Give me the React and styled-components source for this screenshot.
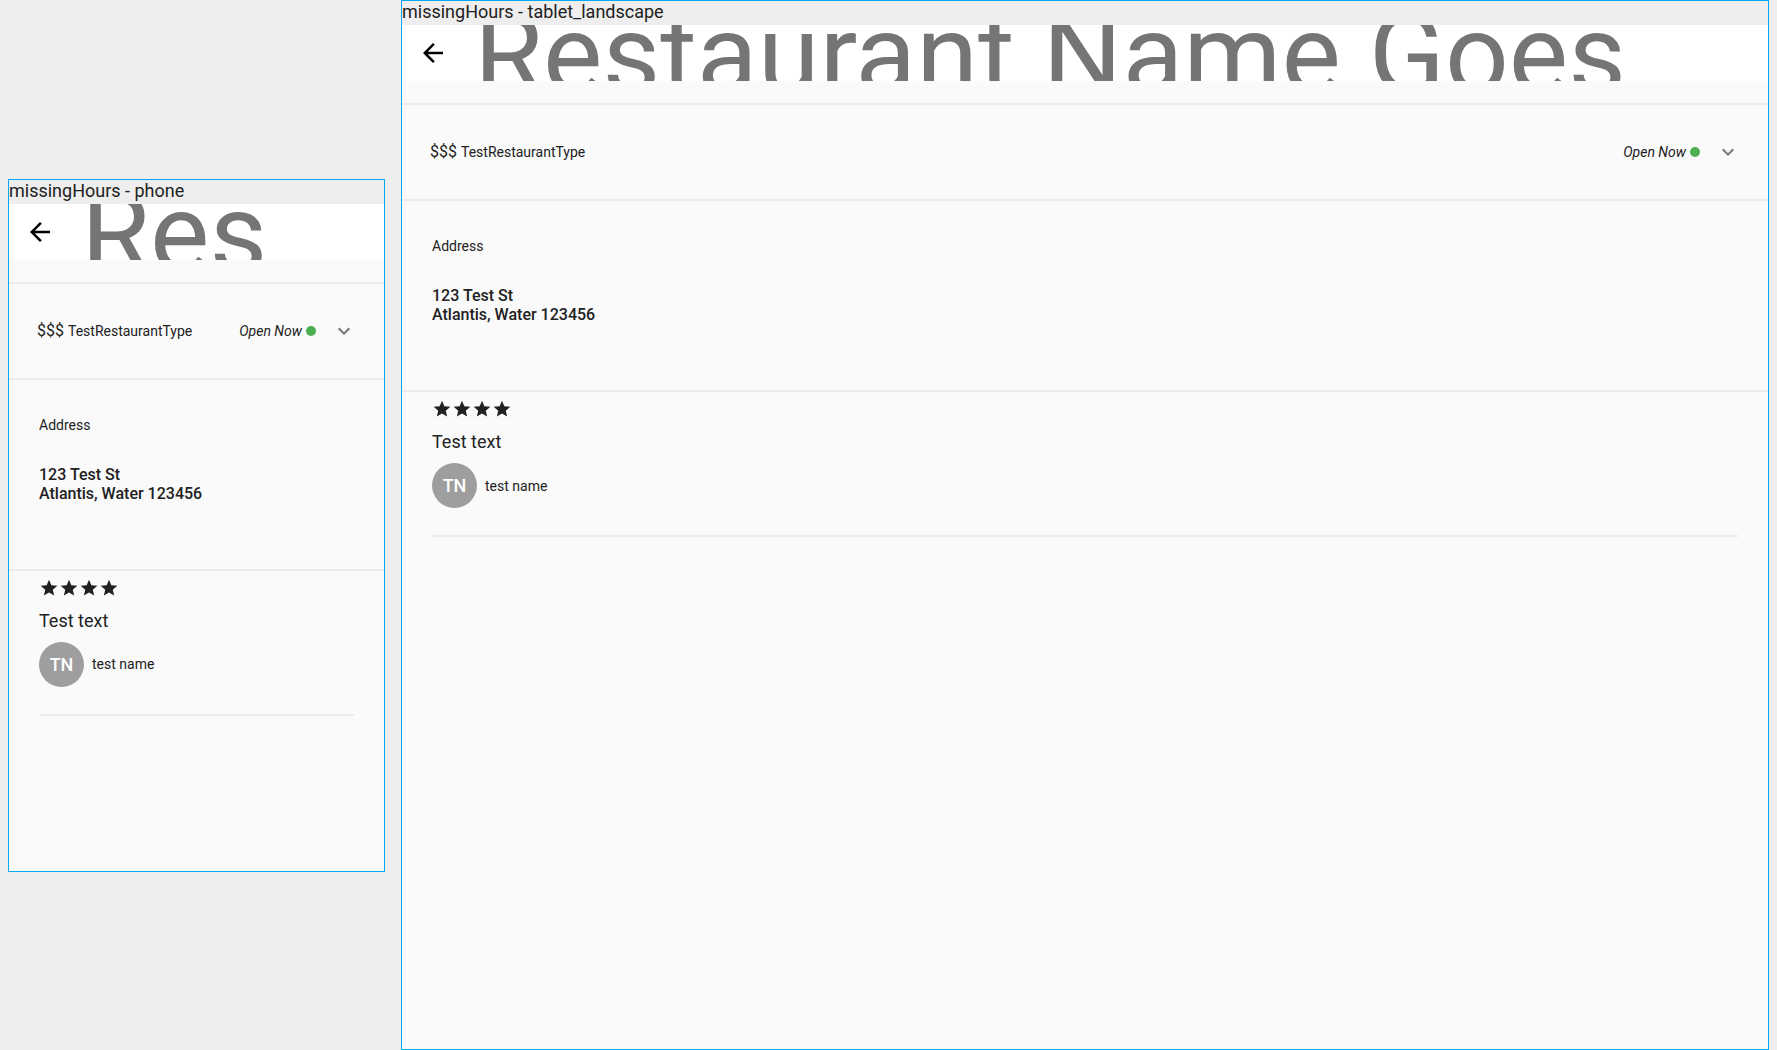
import React from "react";
import styled, { createGlobalStyle } from "styled-components";

const GlobalStyle = createGlobalStyle`
  *, *::before, *::after { box-sizing: border-box; }
  body { margin: 0; background: #eeeeee; }
  h1, h2, h3, p { margin: 0; font-weight: 400; }
`;

const Board = styled.main`
  display: flex;
  align-items: center;
  gap: 16px;
  min-height: 100vh;
  padding: 0 8px;
  font-family: Roboto, "Liberation Sans", sans-serif;
  color: #212121;
`;

const Device = styled.section`
  display: flex;
  flex-direction: column;
  flex: ${(p) => (p.$width ? `0 0 ${p.$width}px` : "1 1 0")};
  min-width: 0;
  min-height: ${(p) => p.$minHeight};
  border: 1px solid #03a9f4;
`;

const Caption = styled.header`
  height: 24px;
`;

const CaptionText = styled.h2`
  font-size: 18px;
  line-height: 21px;
  overflow: hidden;
`;

const Screen = styled.div`
  flex: 1;
  background: #fafafa;
`;

const AppBar = styled.div`
  display: flex;
  align-items: center;
  height: 56px;
  padding: 0 16px 0 8px;
  gap: 18px;
  background: #ffffff;
  overflow: hidden;
`;

const IconButton = styled.button`
  display: grid;
  place-items: center;
  flex: none;
  width: ${(p) => p.$size}px;
  height: ${(p) => p.$size}px;
  padding: 0;
  border: 0;
  background: none;
  color: ${(p) => p.$color};
  cursor: pointer;
`;

const Title = styled.h1`
  flex: 1;
  min-width: 0;
  padding-top: 4px;
  font-size: 112px;
  line-height: 132px;
  color: #757575;
  white-space: nowrap;
  overflow: hidden;
  text-overflow: ellipsis;
`;

const Summary = styled.div`
  display: flex;
  align-items: center;
  height: 98px;
  margin-top: 22px;
  padding: 0 28px;
  border-top: 2px solid #ebebeb;
  border-bottom: 2px solid #ebebeb;
`;

const Small = styled.span`
  font-size: 14px;
  line-height: 20px;
`;

const Kind = styled.p`
  display: flex;
  align-items: baseline;
  gap: 4px;
`;

const Price = styled.span`
  font-size: 16px;
  line-height: 22px;
`;

const Status = styled.div`
  display: flex;
  align-items: center;
  gap: 4px;
  margin: 0 16px 0 auto;
  font-style: italic;
`;

const Dot = styled.span`
  width: 10px;
  height: 10px;
  border-radius: 50%;
  background: #4caf50;
`;

const AddressBlock = styled.div`
  padding: 35px 30px 66px;
  border-bottom: 2px solid #ebebeb;
`;

const Street = styled.p`
  margin-top: 30px;
  font-size: 16px;
  font-weight: 500;
  line-height: 19px;
`;

const Review = styled.article`
  margin: 0 30px;
  padding: 7px 0 27px;
  border-bottom: 2px solid #ebebeb;
`;

const Stars = styled.div`
  display: flex;
  height: 20px;
`;

const ReviewText = styled.p`
  margin: 12px 0 10px;
  font-size: 18px;
  line-height: 22px;
`;

const Author = styled.div`
  display: flex;
  align-items: center;
  gap: 8px;
`;

const Avatar = styled.span`
  display: grid;
  place-items: center;
  width: 45px;
  height: 45px;
  border-radius: 50%;
  background: #9e9e9e;
  color: #ffffff;
  font-size: 18px;
  font-weight: 500;
`;

const BackIcon = () => (
  <svg width="30" height="30" viewBox="0 0 24 24" fill="currentColor" aria-hidden="true">
    <path d="M20 11H7.83l5.59-5.59L12 4l-8 8 8 8 1.41-1.41L7.83 13H20z" />
  </svg>
);

const ChevronIcon = () => (
  <svg width="24" height="24" viewBox="0 0 24 24" fill="currentColor" aria-hidden="true">
    <path d="M16.59 8.59 12 13.17 7.41 8.59 6 10l6 6 6-6z" />
  </svg>
);

const StarIcon = () => (
  <svg width="20" height="20" viewBox="0 0 24 24" fill="currentColor" aria-hidden="true">
    <path d="M12 17.27 18.18 21l-1.64-7.03L22 9.24l-7.19-.61L12 2 9.19 8.63 2 9.24l5.46 4.73L5.82 21z" />
  </svg>
);

const scenarios = [
  { name: "missingHours - phone", width: 377, minHeight: "693px" },
  { name: "missingHours - tablet_landscape", minHeight: "100vh" },
];

const RestaurantScreen = () => (
  <Screen>
    <AppBar>
      <IconButton type="button" $size={46} $color="#000000" aria-label="Back">
        <BackIcon />
      </IconButton>
      <Title>Restaurant Name Goes Here</Title>
    </AppBar>
    <Summary>
      <Kind>
        <Price>$$$</Price>
        <Small>TestRestaurantType</Small>
      </Kind>
      <Status>
        <Small>Open Now</Small>
        <Dot />
      </Status>
      <IconButton type="button" $size={24} $color="#757575" aria-label="Show hours">
        <ChevronIcon />
      </IconButton>
    </Summary>
    <AddressBlock>
      <Small as="h3">Address</Small>
      <Street>
        123 Test St
        <br />
        Atlantis, Water 123456
      </Street>
    </AddressBlock>
    <Review>
      <Stars role="img" aria-label="4 stars">
        {[1, 2, 3, 4].map((n) => (
          <StarIcon key={n} />
        ))}
      </Stars>
      <ReviewText>Test text</ReviewText>
      <Author>
        <Avatar>TN</Avatar>
        <Small>test name</Small>
      </Author>
    </Review>
  </Screen>
);

export default function App() {
  return (
    <>
      <GlobalStyle />
      <Board>
        {scenarios.map((s) => (
          <Device key={s.name} $width={s.width} $minHeight={s.minHeight}>
            <Caption>
              <CaptionText>{s.name}</CaptionText>
            </Caption>
            <RestaurantScreen />
          </Device>
        ))}
      </Board>
    </>
  );
}
